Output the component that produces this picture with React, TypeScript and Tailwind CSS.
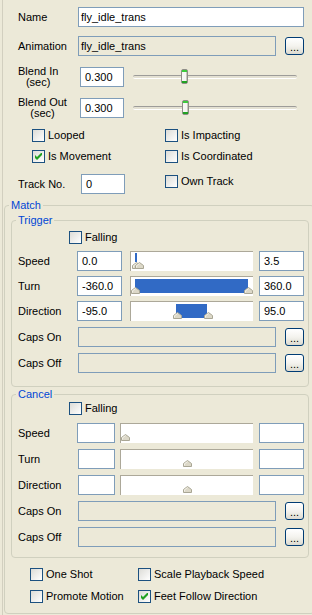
import React from 'react';

function Check({ checked }: { checked?: boolean }) {
  return (
    <span className="relative block w-[13px] h-[13px] shrink-0 border border-[#1C5180] bg-linear-to-br from-[#DCDCD7] to-white">
      {checked && (
        <svg className="absolute left-[2px] top-[2px]" width="7" height="7" viewBox="0 0 7 7">
          <path d="M0 2 L2 4 L6 0 L7 0 L7 2 L2 7 L0 5 Z" fill="#21A121" />
        </svg>
      )}
    </span>
  );
}

function CheckBox({ label, checked }: { label: string; checked?: boolean }) {
  return (
    <div className="flex items-center h-[13px]">
      <Check checked={checked} />
      <span className="ml-[3px] whitespace-nowrap">{label}</span>
    </div>
  );
}

function Input({ value, disabled, className }: { value?: string; disabled?: boolean; className: string }) {
  return (
    <div
      className={`h-[20px] shrink-0 border border-[#7F9DB9] flex items-center whitespace-nowrap overflow-hidden ${
        disabled ? 'bg-[#ECE9D8]' : 'bg-white'
      } ${className}`}
    >
      {value}
    </div>
  );
}

function DotsButton() {
  return (
    <div className="ml-[9px] w-[19px] h-[18px] shrink-0 rounded-[3px] border border-[#003C74] bg-linear-to-b from-white via-[#F4F3EE] to-[#DCDAD0] flex items-end justify-center pb-[3px] leading-[8px]">
      ...
    </div>
  );
}

function BlendSlider({ thumb }: { thumb: number }) {
  return (
    <div className="relative ml-[9px] w-[164px] h-[20px] flex items-center">
      <div className="w-full h-[4px] rounded-[2px] border-t border-[#9D9C99] border-b border-b-white bg-[#E4E1D3]" />
      <svg className="absolute top-[2px]" style={{ left: thumb }} width="7" height="15" viewBox="0 0 7 15">
        <rect x="0.5" y="0.5" width="6" height="14" rx="1.5" fill="#F7F7F4" stroke="#8E8D87" />
        <rect x="5" y="3" width="1" height="9" fill="#C9C8BE" />
        <rect x="1" y="1" width="5" height="2" fill="#3DC93D" />
        <rect x="1" y="12" width="5" height="2" fill="#21A121" />
      </svg>
    </div>
  );
}

function Thumb({ left }: { left: number }) {
  return (
    <svg className="absolute bottom-[2px]" style={{ left }} width="9" height="7" viewBox="0 0 9 7">
      <path d="M0.5 6.5 L0.5 3.5 L4.5 0.5 L8.5 3.5 L8.5 6.5 Z" fill="#DCD8C8" stroke="#A9A694" />
      <path d="M1.5 5.5 L1.5 3.8 L4.5 1.6" fill="none" stroke="#F4F2EA" />
    </svg>
  );
}

function RangeBox({
  className,
  fill,
  thumbs,
}: {
  className: string;
  fill?: { left: number; width: number; top: number; height: number };
  thumbs: number[];
}) {
  return (
    <div className={`relative h-[20px] shrink-0 bg-white border-t border-l border-[#ACA899] ${className}`}>
      {fill && (
        <div
          className="absolute bg-[#316AC5]"
          style={{ left: fill.left, width: fill.width, top: fill.top, height: fill.height }}
        />
      )}
      {thumbs.map((t, i) => (
        <Thumb key={i} left={t} />
      ))}
    </div>
  );
}

function GroupLegend({ children }: { children: React.ReactNode }) {
  return <legend className="ml-[4px] px-[2px] text-[#0046D5] leading-[13px]">{children}</legend>;
}

function TwoLineLabel({ top }: { top: string }) {
  return (
    <span className="w-[62px] h-[20px] flex items-center">
      <span className="flex flex-col items-center leading-[11px]">
        <span>{top}</span>
        <span>(sec)</span>
      </span>
    </span>
  );
}

export default function App() {
  return (
    <div className="w-[312px] h-[615px] overflow-hidden bg-[#ECE9D8] text-[11px] leading-[13px] text-black font-['Liberation_Sans',Arial,sans-serif]">
      <div className="ml-[2px] h-full border-l border-[#D2CFBF]">
        {/* top section */}
        <div className="pl-[15px] pt-[7px]">
          <div className="flex items-center">
            <span className="w-[60px]">Name</span>
            <Input className="w-[226px] pl-[2px]" value="fly_idle_trans" />
          </div>
          <div className="flex items-center mt-[9px]">
            <span className="w-[60px]">Animation</span>
            <Input disabled className="w-[198px] pl-[2px]" value="fly_idle_trans" />
            <DotsButton />
          </div>
          <div className="flex items-center h-[20px] mt-[11px]">
            <TwoLineLabel top="Blend In" />
            <Input className="w-[44px] pl-[4px]" value="0.300" />
            <BlendSlider thumb={48} />
          </div>
          <div className="flex items-center h-[20px] mt-[11px]">
            <TwoLineLabel top="Blend Out" />
            <Input className="w-[44px] pl-[4px]" value="0.300" />
            <BlendSlider thumb={49} />
          </div>
          <div className="flex mt-[11px] ml-[14px]">
            <div className="w-[133px]">
              <CheckBox label="Looped" />
            </div>
            <CheckBox label="Is Impacting" />
          </div>
          <div className="flex mt-[8px] ml-[14px]">
            <div className="w-[133px]">
              <CheckBox label="Is Movement" checked />
            </div>
            <CheckBox label="Is Coordinated" />
          </div>
          <div className="flex items-start mt-[11px]">
            <span className="w-[63px] h-[20px] flex items-center">Track No.</span>
            <Input className="w-[44px] pl-[4px]" value="0" />
            <div className="ml-[40px] mt-[1px]">
              <CheckBox label="Own Track" />
            </div>
          </div>
        </div>

        {/* Match group */}
        <fieldset className="mt-[5px] ml-[1px] w-[311px] border border-[#D0D0BF] rounded-[4px]">
          <GroupLegend>Match</GroupLegend>
          <div className="pt-[2px]">
            {/* Trigger */}
            <fieldset className="ml-[6px] w-[298px] border border-[#D0D0BF] rounded-[4px]">
              <GroupLegend>Trigger</GroupLegend>
              <div className="pl-[6px] pb-[13px]">
                <div className="mt-[4px] ml-[51px]">
                  <CheckBox label="Falling" />
                </div>
                <div className="flex items-center mt-[7px]">
                  <span className="w-[59px]">Speed</span>
                  <Input className="w-[45px] pl-[4px]" value="0.0" />
                  <RangeBox
                    className="ml-[8px] w-[123px]"
                    fill={{ left: 4, width: 2, top: 1, height: 9 }}
                    thumbs={[1, 4]}
                  />
                  <Input className="ml-[6px] w-[45px] pl-[4px]" value="3.5" />
                </div>
                <div className="flex items-center mt-[5px]">
                  <span className="w-[59px]">Turn</span>
                  <Input className="w-[45px] pl-[4px]" value="-360.0" />
                  <RangeBox
                    className="ml-[8px] w-[123px]"
                    fill={{ left: 4, width: 113, top: 2, height: 14 }}
                    thumbs={[0, 113]}
                  />
                  <Input className="ml-[6px] w-[45px] pl-[4px]" value="360.0" />
                </div>
                <div className="flex items-center mt-[5px]">
                  <span className="w-[59px]">Direction</span>
                  <Input className="w-[45px] pl-[4px]" value="-95.0" />
                  <RangeBox
                    className="ml-[8px] w-[123px]"
                    fill={{ left: 45, width: 31, top: 2, height: 14 }}
                    thumbs={[42, 73]}
                  />
                  <Input className="ml-[6px] w-[45px] pl-[4px]" value="95.0" />
                </div>
                <div className="flex items-center mt-[6px]">
                  <span className="w-[60px]">Caps On</span>
                  <Input disabled className="w-[198px]" />
                  <DotsButton />
                </div>
                <div className="flex items-center mt-[6px]">
                  <span className="w-[60px]">Caps Off</span>
                  <Input disabled className="w-[198px]" />
                  <DotsButton />
                </div>
              </div>
            </fieldset>

            {/* Cancel */}
            <fieldset className="mt-[1px] ml-[6px] w-[298px] border border-[#D0D0BF] rounded-[4px]">
              <GroupLegend>Cancel</GroupLegend>
              <div className="pl-[6px] pb-[10px]">
                <div className="mt-[1px] ml-[51px]">
                  <CheckBox label="Falling" />
                </div>
                <div className="flex items-center mt-[8px]">
                  <span className="w-[59px]">Speed</span>
                  <Input className="w-[38px]" />
                  <RangeBox className="ml-[5px] w-[133px]" thumbs={[0]} />
                  <Input className="ml-[6px] w-[45px]" />
                </div>
                <div className="flex items-center mt-[6px]">
                  <span className="w-[60px]">Turn</span>
                  <Input className="w-[37px]" />
                  <RangeBox className="ml-[5px] w-[133px]" thumbs={[62]} />
                  <Input className="ml-[6px] w-[45px]" />
                </div>
                <div className="flex items-center mt-[6px]">
                  <span className="w-[60px]">Direction</span>
                  <Input className="w-[37px]" />
                  <RangeBox className="ml-[5px] w-[133px]" thumbs={[62]} />
                  <Input className="ml-[6px] w-[45px]" />
                </div>
                <div className="flex items-center mt-[6px]">
                  <span className="w-[60px]">Caps On</span>
                  <Input disabled className="w-[198px]" />
                  <DotsButton />
                </div>
                <div className="flex items-center mt-[6px]">
                  <span className="w-[60px]">Caps Off</span>
                  <Input disabled className="w-[198px]" />
                  <DotsButton />
                </div>
              </div>
            </fieldset>

            <div className="pb-[10px]">
              <div className="flex mt-[10px] ml-[25px]">
                <div className="w-[108px]">
                  <CheckBox label="One Shot" />
                </div>
                <CheckBox label="Scale Playback Speed" />
              </div>
              <div className="flex mt-[9px] ml-[25px]">
                <div className="w-[108px]">
                  <CheckBox label="Promote Motion" />
                </div>
                <CheckBox label="Feet Follow Direction" checked />
              </div>
            </div>
          </div>
        </fieldset>
      </div>
    </div>
  );
}
